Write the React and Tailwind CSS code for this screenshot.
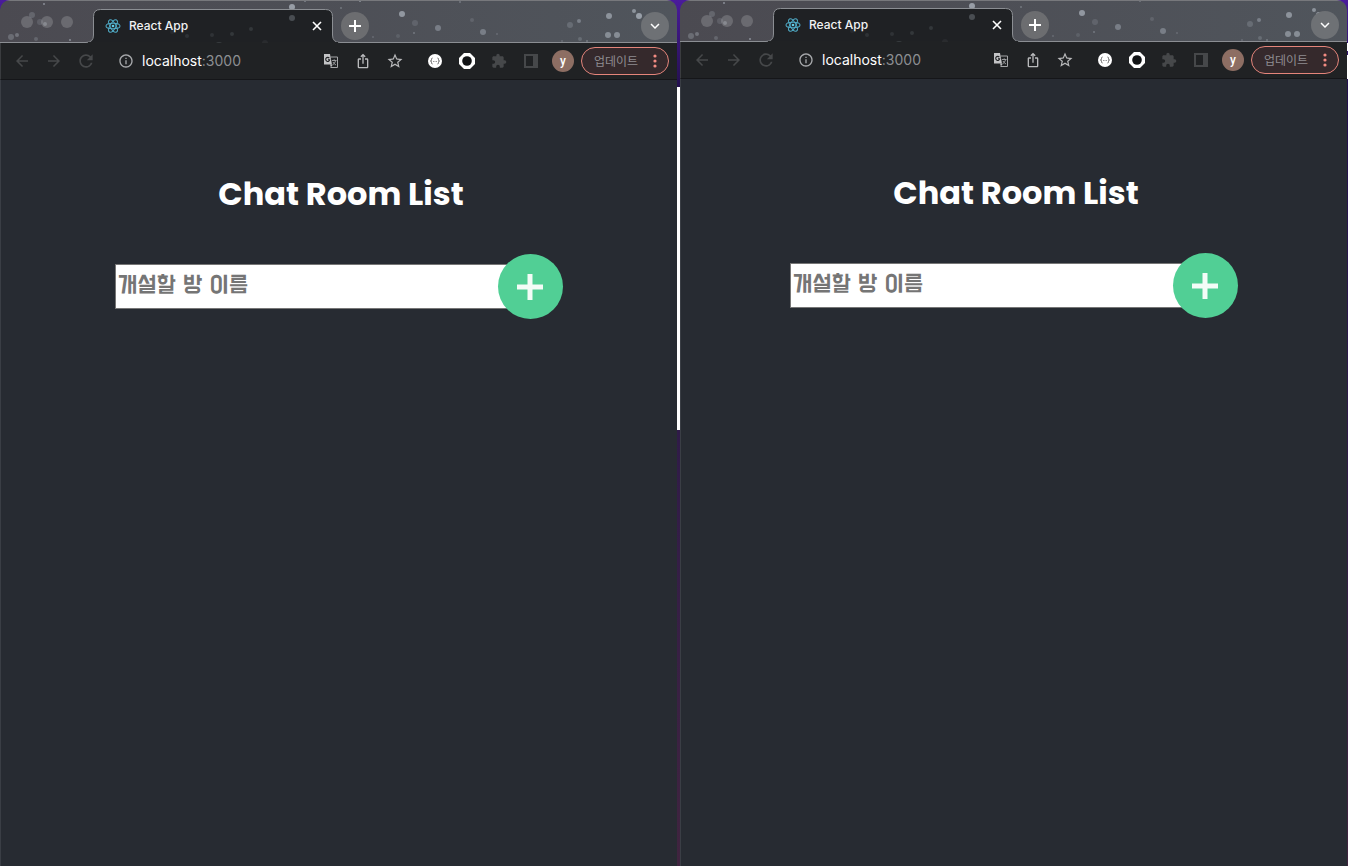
import React from "react";
import {
  MdArrowBack,
  MdArrowForward,
  MdRefresh,
  MdInfoOutline,
  MdIosShare,
  MdStarBorder,
  MdExtension,
  MdKeyboardArrowDown,
} from "react-icons/md";

// [x, y, radius, opacity] of each snowflake; y is measured in a 43px strip
const FLAKES = [
  [32, 15, 3, 0.2], [40, 22, 3, 0.15], [44, 4, 1, 0.5], [45, 24, 2, 0.3],
  [11, 37, 3, 0.25], [17, 35, 2, 0.3], [36, 39, 2, 0.2], [70, 40, 1, 0.5],
  [292, 7, 3, 0.6], [305, 1, 1, 0.4], [360, 1, 1, 0.5], [341, 8, 1, 0.3],
  [402, 14, 3, 0.55], [415, 23, 3, 0.15], [438, 28, 3, 0.35], [414, 33, 1, 0.3],
  [398, 36, 2, 0.12], [373, 37, 1, 0.2], [472, 20, 2, 0.15], [483, 32, 3, 0.35],
  [497, 34, 1, 0.2], [460, 2, 1, 0.3], [570, 25, 3, 0.2], [579, 21, 2, 0.35],
  [609, 16, 3, 0.5], [608, 35, 3, 0.45], [617, 35, 3, 0.45], [634, 11, 2, 0.5],
  [639, 16, 3, 0.6], [580, 39, 2, 0.2], [587, 41, 1, 0.3], [562, 41, 1, 0.2],
];

const TAB_FLAKES = [
  [172, 32, 2, 0.06], [187, 36, 2, 0.1], [212, 35, 2, 0.1], [232, 34, 2, 0.12],
  [251, 29, 2, 0.12], [292, 18, 3, 0.25], [265, 43, 3, 0.06], [219, 46, 4, 0.14],
];

function Flakes({ items }) {
  return items.map(([x, y, r, o]) => (
    <circle key={`${x}-${y}`} cx={x} cy={y} r={r} fill="#c9d2dc" fillOpacity={o} />
  ));
}

function ReactLogo() {
  return (
    <svg viewBox="-12 -12 24 24" className="size-4 shrink-0" fill="none" stroke="#4fa9c4" strokeWidth="1.6" aria-hidden="true">
      <ellipse rx="10.500" ry="4.200" />
      <ellipse rx="10.500" ry="4.200" transform="rotate(60)" />
      <ellipse rx="10.500" ry="4.200" transform="rotate(120)" />
      <circle r="2" fill="#61cbe6" stroke="none" />
    </svg>
  );
}

function ToolButton({ label, className = "", children }) {
  return (
    <button type="button" aria-label={label} className={`flex h-8 w-8 shrink-0 items-center justify-center ${className}`}>
      {children}
    </button>
  );
}

function TabStrip({ height }) {
  return (
    <div className={`relative flex shrink-0 items-end overflow-hidden border-t border-[#77787c] bg-linear-to-r from-[#4b4a51] to-[#50555c] ${height}`}>
      <svg className="absolute bottom-0 left-0" width="1600" height="43" aria-hidden="true">
        <g fill="#6a6a70">
          <circle cx="27" cy="22" r="6" />
          <circle cx="47" cy="22" r="6" />
          <circle cx="67" cy="22" r="6" />
        </g>
        <Flakes items={FLAKES} />
        <path
          d="M-2 42.5H86Q93.500 42.500 93.500 35V16.500Q93.500 9.500 100.500 9.500H325.500Q332.500 9.500 332.500 16.500V35Q332.500 42.500 340 42.500H1602V44H-2Z"
          fill="#1f2124"
          stroke="#8b8e93"
        />
        <path d="M88 42H338V43H88Z" fill="#202224" />
        <Flakes items={TAB_FLAKES} />
      </svg>
      <div className="relative ml-[94px] flex h-[34px] w-[238px] shrink-0 items-center pr-[7px] pl-[11px]">
        <ReactLogo />
        <span className="ml-2 flex-1 font-['Inter'] text-xs font-medium text-[#f1f2f3]">React App</span>
        <button type="button" aria-label="Close tab" className="flex size-4 items-center justify-center">
          <svg viewBox="0 0 10 10" className="size-2.5" aria-hidden="true">
            <path d="M1 1L9 9M9 1L1 9" stroke="#fff" strokeWidth="1.600" />
          </svg>
        </button>
      </div>
      <button type="button" aria-label="New tab" className="relative mb-[3px] ml-[9px] flex size-7 items-center justify-center rounded-full bg-[#6c6d70]">
        <svg viewBox="0 0 12 12" className="size-3" aria-hidden="true">
          <path d="M6 0V12M0 6H12" stroke="#fff" strokeWidth="2" />
        </svg>
      </button>
      <button type="button" aria-label="Search tabs" className="relative mr-2 mb-[3px] ml-auto flex size-7 items-center justify-center rounded-full bg-[#6e7175] text-white">
        <MdKeyboardArrowDown size={18} />
      </button>
    </div>
  );
}

function Toolbar() {
  return (
    <div className="flex h-[37px] shrink-0 items-center border-b border-l border-b-[#151619] border-l-[#3a3c3f] bg-[#202224] pr-2 pl-[5px] text-[#b9babc]">
      <ToolButton label="Back" className="text-[#46484a]"><MdArrowBack size={18} /></ToolButton>
      <ToolButton label="Forward" className="text-[#46484a]"><MdArrowForward size={18} /></ToolButton>
      <ToolButton label="Reload" className="text-[#46484a]"><MdRefresh size={20} /></ToolButton>
      <div className="ml-4 flex min-w-0 flex-1 items-center gap-2">
        <MdInfoOutline size={16} className="shrink-0 text-[#a8aaad]" />
        <span className="truncate font-['Inter'] text-sm text-[#8d8f92]">
          <span className="text-white">localhost</span>:3000
        </span>
      </div>
      <ToolButton label="Translate">
        <svg viewBox="0 0 14 14" className="size-3.5" aria-hidden="true">
          <path d="M6.500 3H13.500V13.500H6.500" fill="none" stroke="#a5a6a8" />
          <path d="M8 6.500H12.500M10.200 5.300V6.500M11.700 6.500Q11 9.500 8.500 11M9 8Q10 10 12 11" fill="none" stroke="#a5a6a8" strokeWidth="0.9" />
          <path d="M0 0H6L8 10.500H0Z" fill="#c3c4c6" />
          <path d="M6 10.500H8.500L7 13.500Z" fill="#c3c4c6" />
          <path d="M5.300 4.200A2 2 0 1 0 5.700 5.700H4" fill="none" stroke="#202224" strokeWidth="1.100" />
        </svg>
      </ToolButton>
      <ToolButton label="Share"><MdIosShare size={16} /></ToolButton>
      <ToolButton label="Bookmark"><MdStarBorder size={18} /></ToolButton>
      <ToolButton label="JSON viewer" className="ml-2">
        <svg viewBox="0 0 14 14" className="size-3.5" aria-hidden="true">
          <circle cx="7" cy="7" r="7" fill="#fff" />
          <path d="M4.500 4Q3.500 4 3.500 5.500T2.500 7Q3.500 7 3.500 8.500T4.500 10M9.500 4Q10.500 4 10.500 5.500T11.500 7Q10.500 7 10.500 8.500T9.500 10" fill="none" stroke="#555" strokeWidth="0.9" />
          <path d="M5 7.500H9" stroke="#999" strokeDasharray="1 0.500" />
        </svg>
      </ToolButton>
      <ToolButton label="Recorder">
        <svg viewBox="0 0 16 16" className="size-4" aria-hidden="true">
          <path d="M5 0H11L16 5V11L11 16H5L0 11V5Z" fill="#fff" />
          <circle cx="8" cy="8" r="4.800" fill="#111315" />
        </svg>
      </ToolButton>
      <ToolButton label="Extensions" className="text-[#46484a]"><MdExtension size={16} /></ToolButton>
      <ToolButton label="Side panel">
        <svg viewBox="0 0 14 14" className="size-3.5" aria-hidden="true">
          <path d="M0 0H14V14H0ZM2 2V12H9V2Z" fill="#46484a" fillRule="evenodd" />
        </svg>
      </ToolButton>
      <ToolButton label="Profile">
        <span className="flex size-[22px] items-center justify-center rounded-full bg-[#8d6e63] font-['Roboto'] text-xs leading-none font-medium text-white">y</span>
      </ToolButton>
      <button type="button" className="ml-[2px] flex h-7 w-[88px] shrink-0 items-center justify-between rounded-full border border-[#e5857b] bg-[#35292c] pr-[11px] pl-3 font-['Noto_Sans_CJK_KR',sans-serif] text-xs text-[#8f8c90]">
        업데이트
        <svg viewBox="0 0 4 14" className="h-3.5 w-1" fill="#f28b82" aria-hidden="true">
          <circle cx="2" cy="2" r="1.600" />
          <circle cx="2" cy="7" r="1.600" />
          <circle cx="2" cy="12" r="1.600" />
        </svg>
      </button>
    </div>
  );
}

function ChatRooms() {
  return (
    <main className="flex flex-1 flex-col items-center border-l border-[#3a3e45] bg-[#272b32] pt-[94px]">
      <h1 className="pl-1 font-['Poppins','Inter',sans-serif] text-[32px] leading-10 font-bold text-white">Chat Room List</h1>
      <form className="mt-10 flex items-center" onSubmit={(e) => e.preventDefault()}>
        <input
          type="text"
          aria-label="개설할 방 이름"
          placeholder="개설할 방 이름"
          className="h-[45px] w-[408px] border border-[#767676] bg-white px-[2px] pb-[2px] font-['Do_Hyeon','Noto_Sans_CJK_KR',sans-serif] text-[25px] text-black placeholder:text-[#757575]"
        />
        <button type="submit" aria-label="Add room" className="relative -ml-[25px] flex size-[65px] items-center justify-center rounded-full bg-[#51cf95]">
          <svg viewBox="0 0 27 27" className="size-[27px]" aria-hidden="true">
            <path d="M13 1V27M0 14H26" stroke="#f3fcf7" strokeWidth="5" />
          </svg>
        </button>
      </form>
    </main>
  );
}

function BrowserWindow({ className, stripHeight }) {
  return (
    <section className={`flex min-w-0 flex-col overflow-hidden rounded-t-[10px] ${className}`}>
      <TabStrip height={stripHeight} />
      <Toolbar />
      <ChatRooms />
    </section>
  );
}

export default function App() {
  return (
    <div className="flex min-h-screen bg-linear-to-b from-[#4a1b9c] via-[#24104f] via-10% to-[#40243f]">
      <BrowserWindow className="flex-[677]" stripHeight="h-[43px]" />
      <div className="w-[3px] shrink-0 pt-[87px]">
        <div className="h-[343px] bg-white" />
      </div>
      <BrowserWindow className="flex-[667]" stripHeight="h-[42px]" />
      <div className="w-px shrink-0 pt-[43px]">
        <div className="h-2 bg-white" />
        <div className="mt-1 h-6 bg-white" />
      </div>
    </div>
  );
}
